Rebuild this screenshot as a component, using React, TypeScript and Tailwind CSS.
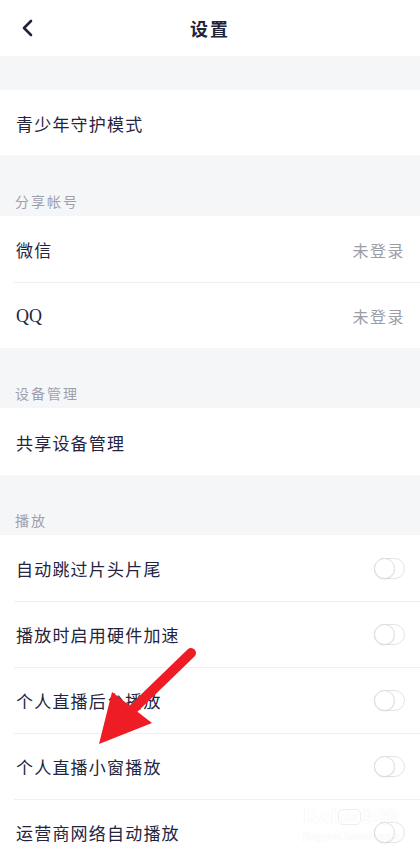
import React from "react";

const font = { fontFamily: '"Noto Sans CJK SC", "Noto Sans", sans-serif' };

function Toggle() {
  return (
    <div className="w-[31px] h-[21px] rounded-full border border-[#e2e2e8] bg-white relative">
      <div className="absolute left-[-1px] top-[-1px] w-[21px] h-[21px] rounded-full border border-[#dcdce2] bg-white shadow-[0_1px_1px_rgba(0,0,0,0.06)]" />
    </div>
  );
}

function Row({
  label,
  right,
  toggle,
  divider,
  serif,
  h = "h-[66px]",
}: {
  label: string;
  right?: string;
  toggle?: boolean;
  divider?: boolean;
  serif?: boolean;
  h?: string;
}) {
  return (
    <div className={`bg-white ${h} flex items-center pl-[16px] pr-[15px] relative`}>
      {divider && <div className="absolute top-0 left-[14px] right-0 h-px bg-[#f0f0f3]" />}
      <span
        className="flex-1 text-[17px] tracking-[1.2px] text-[#24243e] pt-[2px]"
        style={serif ? { fontFamily: '"Liberation Serif", serif', fontSize: "18px", letterSpacing: "0px" } : undefined}
      >
        {label}
      </span>
      {right && <span className="text-[16px] tracking-[1.5px] text-[#9d9da8] pt-[2px]">{right}</span>}
      {toggle && <Toggle />}
    </div>
  );
}

function Section({ label, h }: { label: string; h: string }) {
  return (
    <div className={`bg-[#f5f6f8] ${h} flex items-end pl-[15px] pb-[4px]`}>
      <span className="text-[14px] tracking-[2px] text-[#a0a0ac]">{label}</span>
    </div>
  );
}

export default function App() {
  return (
    <div className="w-[420px] h-[860px] overflow-hidden bg-white relative" style={font}>
      <div className="h-[56px] flex items-center justify-center relative bg-white">
        <svg className="absolute left-[20px] top-[18px]" width="16" height="20" viewBox="0 0 16 20">
          <path d="M11 3 L4 10 L11 17" fill="none" stroke="#22223a" strokeWidth="2.6" strokeLinecap="round" strokeLinejoin="round" />
        </svg>
        <span className="text-[18px] font-bold tracking-[2px] text-[#22223a]">设置</span>
      </div>
      <div className="h-[34px] bg-[#f5f6f8]" />
      <Row label="青少年守护模式" h="h-[65px]" />
      <Section label="分享帐号" h="h-[61px]" />
      <Row label="微信" right="未登录" />
      <Row label="QQ" right="未登录" divider serif />
      <Section label="设备管理" h="h-[60px]" />
      <Row label="共享设备管理" h="h-[67px]" />
      <Section label="播放" h="h-[60px]" />
      <Row label="自动跳过片头片尾" toggle />
      <Row label="播放时启用硬件加速" toggle divider />
      <Row label="个人直播后台播放" toggle divider />
      <Row label="个人直播小窗播放" toggle divider />
      <Row label="运营商网络自动播放" toggle divider />

      {/* red arrow */}
      <svg className="absolute left-0 top-0 pointer-events-none" width="420" height="860" viewBox="0 0 420 860">
        <line x1="191" y1="653" x2="128" y2="714" stroke="#ee1c25" strokeWidth="10" strokeLinecap="round" />
        <polygon points="99,744 112,692 152,723" fill="#ee1c25" />
      </svg>

      {/* watermark */}
      <div className="absolute left-[303px] top-[806px] pointer-events-none opacity-35" style={{ fontFamily: '"Liberation Sans", "Noto Sans CJK SC", sans-serif' }}>
        <div className="flex items-center text-[22px] font-bold text-white leading-none [text-shadow:0_0_1px_#c8c8c8]">
          <span>Bai</span>
          <span className="mx-[1px] text-[14px] px-[2px] rounded-[5px] border border-[#d0d0d0]">du</span>
          <span className="text-[18px]">经验</span>
        </div>
        <div className="text-[11px] font-bold text-white leading-none mt-[3px] [text-shadow:0_0_1px_#c8c8c8]">jingyan.baidu.com</div>
      </div>
    </div>
  );
}
